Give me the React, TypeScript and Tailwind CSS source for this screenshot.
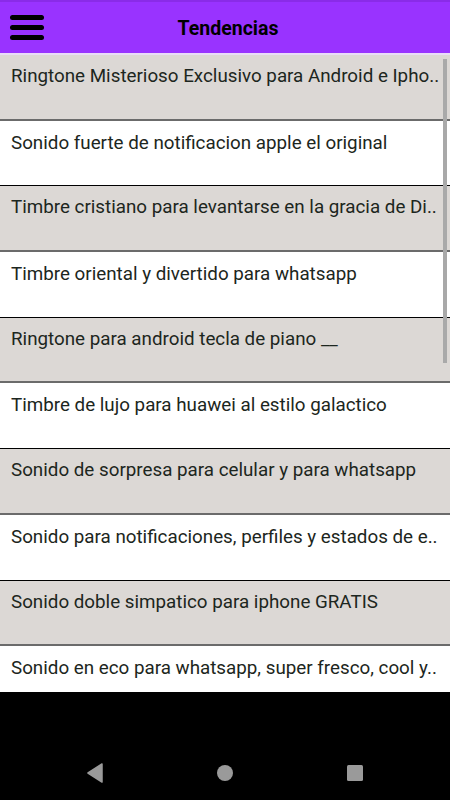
import React from 'react';

const items = [
  'Ringtone Misterioso Exclusivo para Android e Ipho..',
  'Sonido fuerte de notificacion apple el original',
  'Timbre cristiano para levantarse en la gracia de Di..',
  'Timbre oriental y divertido para whatsapp',
  'Ringtone para android tecla de piano __',
  'Timbre de lujo para huawei al estilo galactico',
  'Sonido de sorpresa para celular y para whatsapp',
  'Sonido para notificaciones, perfiles y estados de e..',
  'Sonido doble simpatico para iphone GRATIS',
  'Sonido en eco para whatsapp, super fresco, cool y..',
];

export default function App() {
  return (
    <div className="w-[450px] h-[800px] flex flex-col bg-black overflow-hidden font-['Roboto',sans-serif]">
      <div className="h-[53px] shrink-0 bg-[#9933ff] border-t-2 border-[#8a2be8] flex items-center relative">
        <div className="pl-[10px] flex flex-col gap-[5px]">
          <span className="block w-[34px] h-[5px] rounded-full bg-black" />
          <span className="block w-[34px] h-[5px] rounded-full bg-black" />
          <span className="block w-[34px] h-[5px] rounded-full bg-black" />
        </div>
        <div className="absolute inset-0 flex items-center justify-center pl-[6px] pt-[2px] text-[19.5px] font-bold text-black">Tendencias</div>
      </div>
      <div className="h-[2px] shrink-0 bg-[#e9dcf7]" />
      <div className="relative h-[637px] shrink-0 overflow-hidden bg-white">
        {items.map((t, i) => (
          <div
            key={i}
            className={
              i % 2 === 0
                ? 'h-[65.7px] bg-[#dcd8d5] border-b-2 border-[#6b6b6b] pl-[11px] pt-[9px]'
                : 'h-[65.7px] bg-white border-b border-black pl-[11px] pt-[10px]'
            }
          >
            <p className="text-[18.8px] leading-[24px] text-[#1c2620] whitespace-nowrap">{t}</p>
          </div>
        ))}
        <div className="absolute right-[3px] top-[4px] w-[4px] h-[304px] bg-[#a9a9a9]" />
      </div>
      <div className="flex-1 flex items-center justify-between px-[86px] pt-[54px]">
        <svg width="18" height="20" viewBox="0 0 18 20"><path d="M16 1 L2 10 L16 19 Z" fill="#9a9a9a" stroke="#9a9a9a" strokeLinejoin="round" strokeWidth="1.5" /></svg>
        <svg width="18" height="18" viewBox="0 0 18 18"><circle cx="9" cy="9" r="8" fill="#9a9a9a" /></svg>
        <svg width="18" height="18" viewBox="0 0 18 18"><rect x="1" y="1" width="16" height="16" rx="1.5" fill="#9a9a9a" /></svg>
      </div>
    </div>
  );
}
